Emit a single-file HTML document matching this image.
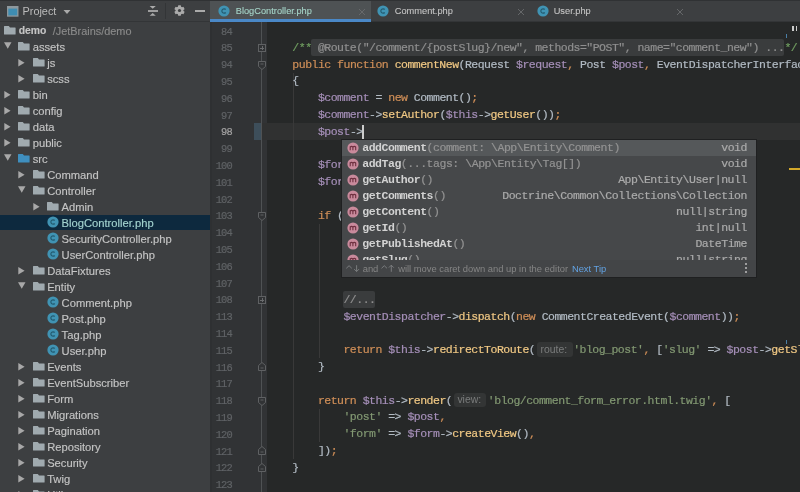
<!DOCTYPE html><html><head><meta charset="utf-8"><style>
*{box-sizing:border-box}
html,body{margin:0;padding:0}
body{width:800px;height:492px;overflow:hidden;position:relative;background:#262828;font-family:"Liberation Sans",sans-serif}
#root{position:absolute;left:0;top:0;width:800px;height:492px;will-change:transform}
.a{position:absolute}
.code{-webkit-text-stroke:0.2px currentColor;position:absolute;font-family:"Liberation Mono",monospace;font-size:11.50px;letter-spacing:-0.510px;line-height:16.80px;white-space:pre;height:16.80px}
.ln{position:absolute;left:210px;width:21.9px;padding-top:1.3px;text-align:right;font-family:"Liberation Mono",monospace;font-size:10.4px;letter-spacing:-0.84px;color:#77797b;-webkit-text-stroke:0.2px currentColor;line-height:16.80px;height:16.80px}
.tr{position:absolute;left:0;width:210px;height:16px;line-height:16px;font-size:11.2px;color:#c4c4c4;white-space:nowrap;-webkit-text-stroke:0.15px currentColor}
.tr span.t{position:absolute;top:0}
</style></head><body><div id="root">

<div class="a" style="left:0;top:0;width:210px;height:492px;background:#3d3f41"></div>
<div class="a" style="left:0;top:21px;width:210px;height:1.2px;background:#333537"></div>
<svg class="a" style="left:7px;top:6.3px" width="11.5" height="10.7" viewBox="0 0 11.5 10.7"><rect x="0" y="0" width="11.5" height="10.7" fill="#8e989d"/><rect x="1.3" y="2.6" width="8.9" height="6.8" fill="#3f8db2"/></svg>
<div class="a" style="left:22.5px;top:4px;font-size:10.9px;line-height:14px;color:#bbbbbb">Project</div>
<svg class="a" style="left:63px;top:9px" width="8" height="6" viewBox="0 0 8 6"><path d="M0.5 1H7.5L4 5z" fill="#aaaaaa"/></svg>
<svg class="a" style="left:147px;top:5px" width="12" height="12" viewBox="0 0 12 12"><path d="M1 6H11" stroke="#aaaaaa" stroke-width="1.8"/><path d="M2.6 1.1H8.8L5.7 3.8z M2.6 10.8H8.8L5.7 8.1z" fill="#aaaaaa"/></svg>
<div class="a" style="left:165.3px;top:3px;width:1.2px;height:15.5px;background:#333537"></div>
<svg class="a" style="left:173.5px;top:5.3px" width="11" height="11" viewBox="-5.5 -5.5 11 11"><g fill="#aaaaaa"><circle r="3.9"/><rect x="-1.5" y="-5.2" width="3" height="10.4" rx="0.6" transform="rotate(0)"/><rect x="-1.5" y="-5.2" width="3" height="10.4" rx="0.6" transform="rotate(60)"/><rect x="-1.5" y="-5.2" width="3" height="10.4" rx="0.6" transform="rotate(120)"/></g><circle r="1.6" fill="#3d3f41"/></svg>
<div class="a" style="left:194.7px;top:9.9px;width:10.5px;height:2px;background:#aaaaaa"></div>
<svg class="a" style="left:4.00px;top:26.30px" width="12" height="9" viewBox="0 0 12 9"><path d="M0.5 0H4.8L6 1.6H11.1Q11.6 1.6 11.6 2.1V8.1Q11.6 8.6 11.1 8.6H0.5Q0 8.6 0 8.1V0.5Q0 0 0.5 0z" fill="#a0aaaf"/></svg>
<div class="tr" style="top:22.80px"><span class="t" style="left:18.7px;font-weight:bold;font-size:10.4px">demo</span><span class="t" style="left:52.8px;color:#8a8a8a;font-size:10.9px">/JetBrains/demo</span></div>
<svg class="a" style="left:4.00px;top:42.30px" width="8" height="7" viewBox="0 0 8 7"><path d="M0 0.3H7.5L3.75 6.7z" fill="#a8a8a8"/></svg>
<svg class="a" style="left:18.30px;top:41.80px" width="12" height="9" viewBox="0 0 12 9"><path d="M0.5 0H4.8L6 1.6H11.1Q11.6 1.6 11.6 2.1V8.1Q11.6 8.6 11.1 8.6H0.5Q0 8.6 0 8.1V0.5Q0 0 0.5 0z" fill="#a0aaaf"/></svg>
<div class="tr" style="top:38.80px"><span class="t" style="left:32.70px;color:#c4c4c4">assets</span></div>
<svg class="a" style="left:18.25px;top:59.00px" width="7" height="8" viewBox="0 0 7 8"><path d="M0.3 0V7.6L6.6 3.8z" fill="#a8a8a8"/></svg>
<svg class="a" style="left:32.75px;top:57.80px" width="12" height="9" viewBox="0 0 12 9"><path d="M0.5 0H4.8L6 1.6H11.1Q11.6 1.6 11.6 2.1V8.1Q11.6 8.6 11.1 8.6H0.5Q0 8.6 0 8.1V0.5Q0 0 0.5 0z" fill="#a0aaaf"/></svg>
<div class="tr" style="top:54.80px"><span class="t" style="left:47.15px;color:#c4c4c4">js</span></div>
<svg class="a" style="left:18.25px;top:75.00px" width="7" height="8" viewBox="0 0 7 8"><path d="M0.3 0V7.6L6.6 3.8z" fill="#a8a8a8"/></svg>
<svg class="a" style="left:32.75px;top:73.80px" width="12" height="9" viewBox="0 0 12 9"><path d="M0.5 0H4.8L6 1.6H11.1Q11.6 1.6 11.6 2.1V8.1Q11.6 8.6 11.1 8.6H0.5Q0 8.6 0 8.1V0.5Q0 0 0.5 0z" fill="#a0aaaf"/></svg>
<div class="tr" style="top:70.80px"><span class="t" style="left:47.15px;color:#c4c4c4">scss</span></div>
<svg class="a" style="left:3.80px;top:91.00px" width="7" height="8" viewBox="0 0 7 8"><path d="M0.3 0V7.6L6.6 3.8z" fill="#a8a8a8"/></svg>
<svg class="a" style="left:18.30px;top:89.80px" width="12" height="9" viewBox="0 0 12 9"><path d="M0.5 0H4.8L6 1.6H11.1Q11.6 1.6 11.6 2.1V8.1Q11.6 8.6 11.1 8.6H0.5Q0 8.6 0 8.1V0.5Q0 0 0.5 0z" fill="#a0aaaf"/></svg>
<div class="tr" style="top:86.80px"><span class="t" style="left:32.70px;color:#c4c4c4">bin</span></div>
<svg class="a" style="left:3.80px;top:107.00px" width="7" height="8" viewBox="0 0 7 8"><path d="M0.3 0V7.6L6.6 3.8z" fill="#a8a8a8"/></svg>
<svg class="a" style="left:18.30px;top:105.80px" width="12" height="9" viewBox="0 0 12 9"><path d="M0.5 0H4.8L6 1.6H11.1Q11.6 1.6 11.6 2.1V8.1Q11.6 8.6 11.1 8.6H0.5Q0 8.6 0 8.1V0.5Q0 0 0.5 0z" fill="#a0aaaf"/></svg>
<div class="tr" style="top:102.80px"><span class="t" style="left:32.70px;color:#c4c4c4">config</span></div>
<svg class="a" style="left:3.80px;top:123.00px" width="7" height="8" viewBox="0 0 7 8"><path d="M0.3 0V7.6L6.6 3.8z" fill="#a8a8a8"/></svg>
<svg class="a" style="left:18.30px;top:121.80px" width="12" height="9" viewBox="0 0 12 9"><path d="M0.5 0H4.8L6 1.6H11.1Q11.6 1.6 11.6 2.1V8.1Q11.6 8.6 11.1 8.6H0.5Q0 8.6 0 8.1V0.5Q0 0 0.5 0z" fill="#a0aaaf"/></svg>
<div class="tr" style="top:118.80px"><span class="t" style="left:32.70px;color:#c4c4c4">data</span></div>
<svg class="a" style="left:3.80px;top:139.00px" width="7" height="8" viewBox="0 0 7 8"><path d="M0.3 0V7.6L6.6 3.8z" fill="#a8a8a8"/></svg>
<svg class="a" style="left:18.30px;top:137.80px" width="12" height="9" viewBox="0 0 12 9"><path d="M0.5 0H4.8L6 1.6H11.1Q11.6 1.6 11.6 2.1V8.1Q11.6 8.6 11.1 8.6H0.5Q0 8.6 0 8.1V0.5Q0 0 0.5 0z" fill="#a0aaaf"/></svg>
<div class="tr" style="top:134.80px"><span class="t" style="left:32.70px;color:#c4c4c4">public</span></div>
<svg class="a" style="left:4.00px;top:154.30px" width="8" height="7" viewBox="0 0 8 7"><path d="M0 0.3H7.5L3.75 6.7z" fill="#a8a8a8"/></svg>
<svg class="a" style="left:18.30px;top:153.80px" width="12" height="9" viewBox="0 0 12 9"><path d="M0.5 0H4.8L6 1.6H11.1Q11.6 1.6 11.6 2.1V8.1Q11.6 8.6 11.1 8.6H0.5Q0 8.6 0 8.1V0.5Q0 0 0.5 0z" fill="#3f8fbf"/></svg>
<div class="tr" style="top:150.80px"><span class="t" style="left:32.70px;color:#c4c4c4">src</span></div>
<svg class="a" style="left:18.25px;top:171.00px" width="7" height="8" viewBox="0 0 7 8"><path d="M0.3 0V7.6L6.6 3.8z" fill="#a8a8a8"/></svg>
<svg class="a" style="left:32.75px;top:169.80px" width="12" height="9" viewBox="0 0 12 9"><path d="M0.5 0H4.8L6 1.6H11.1Q11.6 1.6 11.6 2.1V8.1Q11.6 8.6 11.1 8.6H0.5Q0 8.6 0 8.1V0.5Q0 0 0.5 0z" fill="#a0aaaf"/></svg>
<div class="tr" style="top:166.80px"><span class="t" style="left:47.15px;color:#c4c4c4">Command</span></div>
<svg class="a" style="left:18.45px;top:186.30px" width="8" height="7" viewBox="0 0 8 7"><path d="M0 0.3H7.5L3.75 6.7z" fill="#a8a8a8"/></svg>
<svg class="a" style="left:32.75px;top:185.80px" width="12" height="9" viewBox="0 0 12 9"><path d="M0.5 0H4.8L6 1.6H11.1Q11.6 1.6 11.6 2.1V8.1Q11.6 8.6 11.1 8.6H0.5Q0 8.6 0 8.1V0.5Q0 0 0.5 0z" fill="#a0aaaf"/></svg>
<div class="tr" style="top:182.80px"><span class="t" style="left:47.15px;color:#c4c4c4">Controller</span></div>
<svg class="a" style="left:32.70px;top:203.00px" width="7" height="8" viewBox="0 0 7 8"><path d="M0.3 0V7.6L6.6 3.8z" fill="#a8a8a8"/></svg>
<svg class="a" style="left:47.20px;top:201.80px" width="12" height="9" viewBox="0 0 12 9"><path d="M0.5 0H4.8L6 1.6H11.1Q11.6 1.6 11.6 2.1V8.1Q11.6 8.6 11.1 8.6H0.5Q0 8.6 0 8.1V0.5Q0 0 0.5 0z" fill="#a0aaaf"/></svg>
<div class="tr" style="top:198.80px"><span class="t" style="left:61.60px;color:#c4c4c4">Admin</span></div>
<div class="a" style="left:0;top:214.60px;width:210px;height:15.4px;background:#0d293e"></div>
<svg class="a" style="left:46.70px;top:216.40px" width="12" height="12" viewBox="0 0 12 12"><circle cx="6" cy="6" r="5.6" fill="#4093b3"/><path d="M7.7 4.5A2.2 2.2 0 1 0 7.7 7.5" fill="none" stroke="#235b70" stroke-width="1.2"/></svg>
<div class="tr" style="top:214.80px"><span class="t" style="left:61.60px;color:#a3d3cf">BlogController.php</span></div>
<svg class="a" style="left:46.70px;top:232.40px" width="12" height="12" viewBox="0 0 12 12"><circle cx="6" cy="6" r="5.6" fill="#4093b3"/><path d="M7.7 4.5A2.2 2.2 0 1 0 7.7 7.5" fill="none" stroke="#235b70" stroke-width="1.2"/></svg>
<div class="tr" style="top:230.80px"><span class="t" style="left:61.60px;color:#c4c4c4">SecurityController.php</span></div>
<svg class="a" style="left:46.70px;top:248.40px" width="12" height="12" viewBox="0 0 12 12"><circle cx="6" cy="6" r="5.6" fill="#4093b3"/><path d="M7.7 4.5A2.2 2.2 0 1 0 7.7 7.5" fill="none" stroke="#235b70" stroke-width="1.2"/></svg>
<div class="tr" style="top:246.80px"><span class="t" style="left:61.60px;color:#c4c4c4">UserController.php</span></div>
<svg class="a" style="left:18.25px;top:267.00px" width="7" height="8" viewBox="0 0 7 8"><path d="M0.3 0V7.6L6.6 3.8z" fill="#a8a8a8"/></svg>
<svg class="a" style="left:32.75px;top:265.80px" width="12" height="9" viewBox="0 0 12 9"><path d="M0.5 0H4.8L6 1.6H11.1Q11.6 1.6 11.6 2.1V8.1Q11.6 8.6 11.1 8.6H0.5Q0 8.6 0 8.1V0.5Q0 0 0.5 0z" fill="#a0aaaf"/></svg>
<div class="tr" style="top:262.80px"><span class="t" style="left:47.15px;color:#c4c4c4">DataFixtures</span></div>
<svg class="a" style="left:18.45px;top:282.30px" width="8" height="7" viewBox="0 0 8 7"><path d="M0 0.3H7.5L3.75 6.7z" fill="#a8a8a8"/></svg>
<svg class="a" style="left:32.75px;top:281.80px" width="12" height="9" viewBox="0 0 12 9"><path d="M0.5 0H4.8L6 1.6H11.1Q11.6 1.6 11.6 2.1V8.1Q11.6 8.6 11.1 8.6H0.5Q0 8.6 0 8.1V0.5Q0 0 0.5 0z" fill="#a0aaaf"/></svg>
<div class="tr" style="top:278.80px"><span class="t" style="left:47.15px;color:#c4c4c4">Entity</span></div>
<svg class="a" style="left:46.70px;top:296.40px" width="12" height="12" viewBox="0 0 12 12"><circle cx="6" cy="6" r="5.6" fill="#4093b3"/><path d="M7.7 4.5A2.2 2.2 0 1 0 7.7 7.5" fill="none" stroke="#235b70" stroke-width="1.2"/></svg>
<div class="tr" style="top:294.80px"><span class="t" style="left:61.60px;color:#c4c4c4">Comment.php</span></div>
<svg class="a" style="left:46.70px;top:312.40px" width="12" height="12" viewBox="0 0 12 12"><circle cx="6" cy="6" r="5.6" fill="#4093b3"/><path d="M7.7 4.5A2.2 2.2 0 1 0 7.7 7.5" fill="none" stroke="#235b70" stroke-width="1.2"/></svg>
<div class="tr" style="top:310.80px"><span class="t" style="left:61.60px;color:#c4c4c4">Post.php</span></div>
<svg class="a" style="left:46.70px;top:328.40px" width="12" height="12" viewBox="0 0 12 12"><circle cx="6" cy="6" r="5.6" fill="#4093b3"/><path d="M7.7 4.5A2.2 2.2 0 1 0 7.7 7.5" fill="none" stroke="#235b70" stroke-width="1.2"/></svg>
<div class="tr" style="top:326.80px"><span class="t" style="left:61.60px;color:#c4c4c4">Tag.php</span></div>
<svg class="a" style="left:46.70px;top:344.40px" width="12" height="12" viewBox="0 0 12 12"><circle cx="6" cy="6" r="5.6" fill="#4093b3"/><path d="M7.7 4.5A2.2 2.2 0 1 0 7.7 7.5" fill="none" stroke="#235b70" stroke-width="1.2"/></svg>
<div class="tr" style="top:342.80px"><span class="t" style="left:61.60px;color:#c4c4c4">User.php</span></div>
<svg class="a" style="left:18.25px;top:363.00px" width="7" height="8" viewBox="0 0 7 8"><path d="M0.3 0V7.6L6.6 3.8z" fill="#a8a8a8"/></svg>
<svg class="a" style="left:32.75px;top:361.80px" width="12" height="9" viewBox="0 0 12 9"><path d="M0.5 0H4.8L6 1.6H11.1Q11.6 1.6 11.6 2.1V8.1Q11.6 8.6 11.1 8.6H0.5Q0 8.6 0 8.1V0.5Q0 0 0.5 0z" fill="#a0aaaf"/></svg>
<div class="tr" style="top:358.80px"><span class="t" style="left:47.15px;color:#c4c4c4">Events</span></div>
<svg class="a" style="left:18.25px;top:379.00px" width="7" height="8" viewBox="0 0 7 8"><path d="M0.3 0V7.6L6.6 3.8z" fill="#a8a8a8"/></svg>
<svg class="a" style="left:32.75px;top:377.80px" width="12" height="9" viewBox="0 0 12 9"><path d="M0.5 0H4.8L6 1.6H11.1Q11.6 1.6 11.6 2.1V8.1Q11.6 8.6 11.1 8.6H0.5Q0 8.6 0 8.1V0.5Q0 0 0.5 0z" fill="#a0aaaf"/></svg>
<div class="tr" style="top:374.80px"><span class="t" style="left:47.15px;color:#c4c4c4">EventSubscriber</span></div>
<svg class="a" style="left:18.25px;top:395.00px" width="7" height="8" viewBox="0 0 7 8"><path d="M0.3 0V7.6L6.6 3.8z" fill="#a8a8a8"/></svg>
<svg class="a" style="left:32.75px;top:393.80px" width="12" height="9" viewBox="0 0 12 9"><path d="M0.5 0H4.8L6 1.6H11.1Q11.6 1.6 11.6 2.1V8.1Q11.6 8.6 11.1 8.6H0.5Q0 8.6 0 8.1V0.5Q0 0 0.5 0z" fill="#a0aaaf"/></svg>
<div class="tr" style="top:390.80px"><span class="t" style="left:47.15px;color:#c4c4c4">Form</span></div>
<svg class="a" style="left:18.25px;top:411.00px" width="7" height="8" viewBox="0 0 7 8"><path d="M0.3 0V7.6L6.6 3.8z" fill="#a8a8a8"/></svg>
<svg class="a" style="left:32.75px;top:409.80px" width="12" height="9" viewBox="0 0 12 9"><path d="M0.5 0H4.8L6 1.6H11.1Q11.6 1.6 11.6 2.1V8.1Q11.6 8.6 11.1 8.6H0.5Q0 8.6 0 8.1V0.5Q0 0 0.5 0z" fill="#a0aaaf"/></svg>
<div class="tr" style="top:406.80px"><span class="t" style="left:47.15px;color:#c4c4c4">Migrations</span></div>
<svg class="a" style="left:18.25px;top:427.00px" width="7" height="8" viewBox="0 0 7 8"><path d="M0.3 0V7.6L6.6 3.8z" fill="#a8a8a8"/></svg>
<svg class="a" style="left:32.75px;top:425.80px" width="12" height="9" viewBox="0 0 12 9"><path d="M0.5 0H4.8L6 1.6H11.1Q11.6 1.6 11.6 2.1V8.1Q11.6 8.6 11.1 8.6H0.5Q0 8.6 0 8.1V0.5Q0 0 0.5 0z" fill="#a0aaaf"/></svg>
<div class="tr" style="top:422.80px"><span class="t" style="left:47.15px;color:#c4c4c4">Pagination</span></div>
<svg class="a" style="left:18.25px;top:443.00px" width="7" height="8" viewBox="0 0 7 8"><path d="M0.3 0V7.6L6.6 3.8z" fill="#a8a8a8"/></svg>
<svg class="a" style="left:32.75px;top:441.80px" width="12" height="9" viewBox="0 0 12 9"><path d="M0.5 0H4.8L6 1.6H11.1Q11.6 1.6 11.6 2.1V8.1Q11.6 8.6 11.1 8.6H0.5Q0 8.6 0 8.1V0.5Q0 0 0.5 0z" fill="#a0aaaf"/></svg>
<div class="tr" style="top:438.80px"><span class="t" style="left:47.15px;color:#c4c4c4">Repository</span></div>
<svg class="a" style="left:18.25px;top:459.00px" width="7" height="8" viewBox="0 0 7 8"><path d="M0.3 0V7.6L6.6 3.8z" fill="#a8a8a8"/></svg>
<svg class="a" style="left:32.75px;top:457.80px" width="12" height="9" viewBox="0 0 12 9"><path d="M0.5 0H4.8L6 1.6H11.1Q11.6 1.6 11.6 2.1V8.1Q11.6 8.6 11.1 8.6H0.5Q0 8.6 0 8.1V0.5Q0 0 0.5 0z" fill="#a0aaaf"/></svg>
<div class="tr" style="top:454.80px"><span class="t" style="left:47.15px;color:#c4c4c4">Security</span></div>
<svg class="a" style="left:18.25px;top:475.00px" width="7" height="8" viewBox="0 0 7 8"><path d="M0.3 0V7.6L6.6 3.8z" fill="#a8a8a8"/></svg>
<svg class="a" style="left:32.75px;top:473.80px" width="12" height="9" viewBox="0 0 12 9"><path d="M0.5 0H4.8L6 1.6H11.1Q11.6 1.6 11.6 2.1V8.1Q11.6 8.6 11.1 8.6H0.5Q0 8.6 0 8.1V0.5Q0 0 0.5 0z" fill="#a0aaaf"/></svg>
<div class="tr" style="top:470.80px"><span class="t" style="left:47.15px;color:#c4c4c4">Twig</span></div>
<svg class="a" style="left:18.25px;top:491.00px" width="7" height="8" viewBox="0 0 7 8"><path d="M0.3 0V7.6L6.6 3.8z" fill="#a8a8a8"/></svg>
<svg class="a" style="left:32.75px;top:489.80px" width="12" height="9" viewBox="0 0 12 9"><path d="M0.5 0H4.8L6 1.6H11.1Q11.6 1.6 11.6 2.1V8.1Q11.6 8.6 11.1 8.6H0.5Q0 8.6 0 8.1V0.5Q0 0 0.5 0z" fill="#a0aaaf"/></svg>
<div class="tr" style="top:486.80px"><span class="t" style="left:47.15px;color:#c4c4c4">Util</span></div>
<div class="a" style="left:210px;top:0;width:590px;height:22px;background:#3d3f41"></div>
<div class="a" style="left:371.25px;top:21px;width:429px;height:1.2px;background:#333537"></div>
<div class="a" style="left:210px;top:0;width:161.25px;height:22px;background:#4e5254"></div>
<div class="a" style="left:210px;top:19.4px;width:161.25px;height:3px;background:#4a88c7"></div>
<svg class="a" style="left:217.75px;top:5.00px" width="12" height="12" viewBox="0 0 12 12"><circle cx="6" cy="6" r="5.6" fill="#4093b3"/><path d="M7.7 4.5A2.2 2.2 0 1 0 7.7 7.5" fill="none" stroke="#235b70" stroke-width="1.2"/></svg>
<div class="a" style="left:235.75px;top:4.2px;font-size:9.25px;line-height:14px;color:#a5d5c8;white-space:nowrap;-webkit-text-stroke:0.1px currentColor">BlogController.php</div>
<svg class="a" style="left:357.75px;top:7.50px" width="8" height="8" viewBox="0 0 8 8"><path d="M1 1L7 7M7 1L1 7" stroke="#6a6c6e" stroke-width="0.9"/></svg>
<svg class="a" style="left:377.20px;top:5.00px" width="12" height="12" viewBox="0 0 12 12"><circle cx="6" cy="6" r="5.6" fill="#4093b3"/><path d="M7.7 4.5A2.2 2.2 0 1 0 7.7 7.5" fill="none" stroke="#235b70" stroke-width="1.2"/></svg>
<div class="a" style="left:394.75px;top:4.2px;font-size:9.25px;line-height:14px;color:#c4c4c4;white-space:nowrap;-webkit-text-stroke:0.1px currentColor">Comment.php</div>
<svg class="a" style="left:516.70px;top:7.50px" width="8" height="8" viewBox="0 0 8 8"><path d="M1 1L7 7M7 1L1 7" stroke="#6a6c6e" stroke-width="0.9"/></svg>
<svg class="a" style="left:536.70px;top:5.00px" width="12" height="12" viewBox="0 0 12 12"><circle cx="6" cy="6" r="5.6" fill="#4093b3"/><path d="M7.7 4.5A2.2 2.2 0 1 0 7.7 7.5" fill="none" stroke="#235b70" stroke-width="1.2"/></svg>
<div class="a" style="left:553.70px;top:4.2px;font-size:9.25px;line-height:14px;color:#c4c4c4;white-space:nowrap;-webkit-text-stroke:0.1px currentColor">User.php</div>
<svg class="a" style="left:675.70px;top:7.50px" width="8" height="8" viewBox="0 0 8 8"><path d="M1 1L7 7M7 1L1 7" stroke="#6a6c6e" stroke-width="0.9"/></svg>
<div class="a" style="left:210px;top:22px;width:56.8px;height:470px;background:#313335"></div>
<div class="a" style="left:210px;top:22px;width:1.5px;height:470px;background:#2e3032"></div>
<div class="a" style="left:261.2px;top:22px;width:1px;height:470px;background:#4f5254"></div>
<div class="a" style="left:262px;top:123.20px;width:538px;height:16.80px;background:#303131"></div>
<div class="a" style="left:254px;top:123.20px;width:7.2px;height:16.80px;background:#3d4e5a"></div>
<div class="a" style="left:293.36px;top:72.80px;width:1px;height:386.40px;background:#393939"></div>
<div class="a" style="left:318.92px;top:224.00px;width:1px;height:134.40px;background:#393939"></div>
<div class="a" style="left:318.92px;top:408.80px;width:1px;height:33.60px;background:#393939"></div>
<div class="ln" style="top:22.40px;color:#606366">84</div>
<div class="ln" style="top:39.20px;color:#606366">85</div>
<div class="ln" style="top:56.00px;color:#606366">94</div>
<div class="ln" style="top:72.80px;color:#606366">95</div>
<div class="ln" style="top:89.60px;color:#606366">96</div>
<div class="ln" style="top:106.40px;color:#606366">97</div>
<div class="ln" style="top:123.20px;color:#a4a3a3">98</div>
<div class="ln" style="top:140.00px;color:#606366">99</div>
<div class="ln" style="top:156.80px;color:#606366">100</div>
<div class="ln" style="top:173.60px;color:#606366">101</div>
<div class="ln" style="top:190.40px;color:#606366">102</div>
<div class="ln" style="top:207.20px;color:#606366">103</div>
<div class="ln" style="top:224.00px;color:#606366">104</div>
<div class="ln" style="top:240.80px;color:#606366">105</div>
<div class="ln" style="top:257.60px;color:#606366">106</div>
<div class="ln" style="top:274.40px;color:#606366">107</div>
<div class="ln" style="top:291.20px;color:#606366">108</div>
<div class="ln" style="top:308.00px;color:#606366">113</div>
<div class="ln" style="top:324.80px;color:#606366">114</div>
<div class="ln" style="top:341.60px;color:#606366">115</div>
<div class="ln" style="top:358.40px;color:#606366">116</div>
<div class="ln" style="top:375.20px;color:#606366">117</div>
<div class="ln" style="top:392.00px;color:#606366">118</div>
<div class="ln" style="top:408.80px;color:#606366">119</div>
<div class="ln" style="top:425.60px;color:#606366">120</div>
<div class="ln" style="top:442.40px;color:#606366">121</div>
<div class="ln" style="top:459.20px;color:#606366">122</div>
<div class="ln" style="top:476.00px;color:#606366">123</div>
<svg class="a" style="left:258px;top:44px" width="8" height="8" viewBox="0 0 8 8"><rect x="0.5" y="0.5" width="7" height="7" fill="#313335" stroke="#5f6163"/><path d="M2 4.5H6M4.5 2V6" stroke="#6a6c6e"/></svg>
<svg class="a" style="left:258px;top:61px" width="8" height="9" viewBox="0 0 8 9"><path d="M0.5 0.5H7.5V5.5L4 8.5L0.5 5.5z" fill="#313335" stroke="#5f6163"/><path d="M2.5 3H5.5" stroke="#5f6163"/></svg>
<svg class="a" style="left:258px;top:212px" width="8" height="9" viewBox="0 0 8 9"><path d="M0.5 0.5H7.5V5.5L4 8.5L0.5 5.5z" fill="#313335" stroke="#5f6163"/><path d="M2.5 3H5.5" stroke="#5f6163"/></svg>
<svg class="a" style="left:258px;top:296px" width="8" height="8" viewBox="0 0 8 8"><rect x="0.5" y="0.5" width="7" height="7" fill="#313335" stroke="#5f6163"/><path d="M2 4.5H6M4.5 2V6" stroke="#6a6c6e"/></svg>
<svg class="a" style="left:258px;top:362px" width="8" height="9" viewBox="0 0 8 9"><path d="M0.5 8.5H7.5V3.5L4 0.5L0.5 3.5z" fill="#313335" stroke="#5f6163"/><path d="M2.5 6H5.5" stroke="#5f6163"/></svg>
<svg class="a" style="left:258px;top:397px" width="8" height="9" viewBox="0 0 8 9"><path d="M0.5 0.5H7.5V5.5L4 8.5L0.5 5.5z" fill="#313335" stroke="#5f6163"/><path d="M2.5 3H5.5" stroke="#5f6163"/></svg>
<svg class="a" style="left:258px;top:446px" width="8" height="9" viewBox="0 0 8 9"><path d="M0.5 8.5H7.5V3.5L4 0.5L0.5 3.5z" fill="#313335" stroke="#5f6163"/><path d="M2.5 6H5.5" stroke="#5f6163"/></svg>
<svg class="a" style="left:258px;top:463px" width="8" height="9" viewBox="0 0 8 9"><path d="M0.5 8.5H7.5V3.5L4 0.5L0.5 3.5z" fill="#313335" stroke="#5f6163"/><path d="M2.5 6H5.5" stroke="#5f6163"/></svg>
<div class="a" style="left:311.03px;top:39.20px;width:473.36px;height:16.80px;background:#3a3c3d;border-radius:2px"></div>
<div class="code" style="left:311.53px;top:39.70px;color:#8f8f8f"> @Route(&quot;/comment/{postSlug}/new&quot;, methods=&quot;POST&quot;, name=&quot;comment_new&quot;) ...</div>
<div class="code" style="left:292.36px;top:39.70px"><span style="color:#6f9d60">/**</span></div>
<div class="code" style="left:784.39px;top:39.70px"><span style="color:#6f9d60">*/</span></div>
<div class="code" style="left:292.36px;top:56.50px"><span style="color:#d08f58">public function </span><span style="color:#f0c884">commentNew</span><span style="color:#b2bbc4">(Request </span><span style="color:#a58fb8">$request</span><span style="color:#d08f58">,</span><span style="color:#b2bbc4"> Post </span><span style="color:#a58fb8">$post</span><span style="color:#d08f58">,</span><span style="color:#b2bbc4"> EventDispatcherInterface </span><span style="color:#a58fb8">$eventDispatcher</span></div>
<div class="code" style="left:292.36px;top:73.30px"><span style="color:#b2bbc4">{</span></div>
<div class="code" style="left:317.92px;top:90.10px"><span style="color:#a58fb8">$comment</span><span style="color:#b2bbc4"> = </span><span style="color:#d08f58">new </span><span style="color:#b2bbc4">Comment()</span><span style="color:#d08f58">;</span></div>
<div class="code" style="left:317.92px;top:106.90px"><span style="color:#a58fb8">$comment</span><span style="color:#b2bbc4">-&gt;</span><span style="color:#f0c884">setAuthor</span><span style="color:#b2bbc4">(</span><span style="color:#a58fb8">$this</span><span style="color:#b2bbc4">-&gt;</span><span style="color:#f0c884">getUser</span><span style="color:#b2bbc4">())</span><span style="color:#d08f58">;</span></div>
<div class="code" style="left:317.92px;top:123.70px"><span style="color:#a58fb8">$post</span><span style="color:#b2bbc4">-&gt;</span></div>
<div class="code" style="left:317.92px;top:157.30px"><span style="color:#a58fb8">$form</span><span style="color:#b2bbc4"> = </span><span style="color:#a58fb8">$this</span></div>
<div class="code" style="left:317.92px;top:174.10px"><span style="color:#a58fb8">$form</span><span style="color:#b2bbc4">-&gt;handleRequest</span></div>
<div class="code" style="left:317.92px;top:207.70px"><span style="color:#d08f58">if </span><span style="color:#b2bbc4">(</span><span style="color:#a58fb8">$form</span></div>
<div class="a" style="left:342.98px;top:291.20px;width:32.45px;height:16.80px;background:#3a3c3d;border-radius:2px"></div>
<div class="code" style="left:343.48px;top:291.70px;color:#8f8f8f">//...</div>
<div class="code" style="left:343.48px;top:308.50px"><span style="color:#a58fb8">$eventDispatcher</span><span style="color:#b2bbc4">-&gt;</span><span style="color:#f0c884">dispatch</span><span style="color:#b2bbc4">(</span><span style="color:#d08f58">new </span><span style="color:#b2bbc4">CommentCreatedEvent(</span><span style="color:#a58fb8">$comment</span><span style="color:#b2bbc4">))</span><span style="color:#d08f58">;</span></div>
<div class="a" style="left:536.58px;top:342.10px;width:36.00px;height:14.6px;background:#333535;border-radius:3px;padding-left:3.9px;font-size:10.45px;line-height:14.6px;color:#7a7c7c;padding-top:0.6px">route:</div>
<div class="code" style="left:343.48px;top:342.10px"><span style="color:#d08f58">return </span><span style="color:#a58fb8">$this</span><span style="color:#b2bbc4">-&gt;</span><span style="color:#f0c884">redirectToRoute</span><span style="color:#b2bbc4">(</span><span style="display:inline-block;width:37.86px;letter-spacing:0"></span><span style="color:#829872">&#x27;blog_post&#x27;</span><span style="color:#d08f58">, </span><span style="color:#b2bbc4">[</span><span style="color:#829872">&#x27;slug&#x27;</span><span style="color:#b2bbc4"> =&gt; </span><span style="color:#a58fb8">$post</span><span style="color:#b2bbc4">-&gt;</span><span style="color:#f0c884">getSlug</span><span style="color:#b2bbc4">()])</span><span style="color:#d08f58">;</span></div>
<div class="code" style="left:317.92px;top:358.90px"><span style="color:#b2bbc4">}</span></div>
<div class="a" style="left:453.51px;top:392.50px;width:32.00px;height:14.6px;background:#333535;border-radius:3px;padding-left:3.9px;font-size:10.45px;line-height:14.6px;color:#7a7c7c;padding-top:0.6px">view:</div>
<div class="code" style="left:317.92px;top:392.50px"><span style="color:#d08f58">return </span><span style="color:#a58fb8">$this</span><span style="color:#b2bbc4">-&gt;</span><span style="color:#f0c884">render</span><span style="color:#b2bbc4">(</span><span style="display:inline-block;width:35.66px;letter-spacing:0"></span><span style="color:#829872">&#x27;blog/comment_form_error.html.twig&#x27;</span><span style="color:#d08f58">, </span><span style="color:#b2bbc4">[</span></div>
<div class="code" style="left:343.48px;top:409.30px"><span style="color:#829872">&#x27;post&#x27;</span><span style="color:#b2bbc4"> =&gt; </span><span style="color:#a58fb8">$post</span><span style="color:#d08f58">,</span></div>
<div class="code" style="left:343.48px;top:426.10px"><span style="color:#829872">&#x27;form&#x27;</span><span style="color:#b2bbc4"> =&gt; </span><span style="color:#a58fb8">$form</span><span style="color:#b2bbc4">-&gt;</span><span style="color:#f0c884">createView</span><span style="color:#b2bbc4">()</span><span style="color:#d08f58">,</span></div>
<div class="code" style="left:317.92px;top:442.90px"><span style="color:#b2bbc4">])</span><span style="color:#d08f58">;</span></div>
<div class="code" style="left:292.36px;top:459.70px"><span style="color:#b2bbc4">}</span></div>
<div class="a" style="left:362.15px;top:125.00px;width:1.6px;height:14px;background:#cccccc"></div>
<div class="a" style="left:792px;top:25.5px;width:1.5px;height:5.5px;background:#cccccc"></div><div class="a" style="left:795.5px;top:25.5px;width:1.5px;height:5.5px;background:#cccccc"></div>
<div class="a" style="left:785.5px;top:34px;width:1.2px;height:4px;background:#4a7fa6"></div>
<div class="a" style="left:785.7px;top:340px;width:1.2px;height:4px;background:#4a7fa6"></div>
<div class="a" style="left:789px;top:168px;width:11px;height:2px;background:#d4a92a"></div>
<div class="a" style="left:340.50px;top:138.75px;width:416.00px;height:139.00px;background:#1f2021"></div>
<div class="a" style="left:341.50px;top:139.75px;width:414.50px;height:137.50px;background:#46484a;overflow:hidden">
<div class="a" style="left:0;top:0;width:414.50px;height:120.25px;overflow:hidden">
<div class="a" style="left:0;top:0;width:414.50px;height:16px;background:#55585a"></div>
<svg class="a" style="left:5.6px;top:2.40px" width="12" height="12" viewBox="0 0 12 12"><circle cx="6" cy="6" r="5.6" fill="#c98a9c"/><path d="M3.2 8.3V4.2M3.2 5.2Q4.5 3.6 5.9 5V8.3M5.9 5.2Q7.3 3.6 8.7 5V8.3" fill="none" stroke="#6e2f3f" stroke-width="1.1"/></svg>
<div class="code" style="left:20.7px;top:0.50px;line-height:16px;height:16px;color:#bbbbbb;letter-spacing:-0.460px"><b style="color:#d2d2d2;-webkit-text-stroke:0">addComment</b><span style="color:#939393">(comment: \App\Entity\Comment)</span></div>
<div class="code" style="right:9.06px;top:0.50px;line-height:16px;height:16px;color:#ababab;text-align:right;letter-spacing:-0.460px">void</div>
<svg class="a" style="left:5.6px;top:18.40px" width="12" height="12" viewBox="0 0 12 12"><circle cx="6" cy="6" r="5.6" fill="#c98a9c"/><path d="M3.2 8.3V4.2M3.2 5.2Q4.5 3.6 5.9 5V8.3M5.9 5.2Q7.3 3.6 8.7 5V8.3" fill="none" stroke="#6e2f3f" stroke-width="1.1"/></svg>
<div class="code" style="left:20.7px;top:16.50px;line-height:16px;height:16px;color:#bbbbbb;letter-spacing:-0.460px"><b style="color:#d2d2d2;-webkit-text-stroke:0">addTag</b><span style="color:#939393">(...tags: \App\Entity\Tag[])</span></div>
<div class="code" style="right:9.06px;top:16.50px;line-height:16px;height:16px;color:#ababab;text-align:right;letter-spacing:-0.460px">void</div>
<svg class="a" style="left:5.6px;top:34.40px" width="12" height="12" viewBox="0 0 12 12"><circle cx="6" cy="6" r="5.6" fill="#c98a9c"/><path d="M3.2 8.3V4.2M3.2 5.2Q4.5 3.6 5.9 5V8.3M5.9 5.2Q7.3 3.6 8.7 5V8.3" fill="none" stroke="#6e2f3f" stroke-width="1.1"/></svg>
<div class="code" style="left:20.7px;top:32.50px;line-height:16px;height:16px;color:#bbbbbb;letter-spacing:-0.460px"><b style="color:#d2d2d2;-webkit-text-stroke:0">getAuthor</b><span style="color:#939393">()</span></div>
<div class="code" style="right:9.06px;top:32.50px;line-height:16px;height:16px;color:#ababab;text-align:right;letter-spacing:-0.460px">App\Entity\User|null</div>
<svg class="a" style="left:5.6px;top:50.40px" width="12" height="12" viewBox="0 0 12 12"><circle cx="6" cy="6" r="5.6" fill="#c98a9c"/><path d="M3.2 8.3V4.2M3.2 5.2Q4.5 3.6 5.9 5V8.3M5.9 5.2Q7.3 3.6 8.7 5V8.3" fill="none" stroke="#6e2f3f" stroke-width="1.1"/></svg>
<div class="code" style="left:20.7px;top:48.50px;line-height:16px;height:16px;color:#bbbbbb;letter-spacing:-0.460px"><b style="color:#d2d2d2;-webkit-text-stroke:0">getComments</b><span style="color:#939393">()</span></div>
<div class="code" style="right:9.06px;top:48.50px;line-height:16px;height:16px;color:#ababab;text-align:right;letter-spacing:-0.460px">Doctrine\Common\Collections\Collection</div>
<svg class="a" style="left:5.6px;top:66.40px" width="12" height="12" viewBox="0 0 12 12"><circle cx="6" cy="6" r="5.6" fill="#c98a9c"/><path d="M3.2 8.3V4.2M3.2 5.2Q4.5 3.6 5.9 5V8.3M5.9 5.2Q7.3 3.6 8.7 5V8.3" fill="none" stroke="#6e2f3f" stroke-width="1.1"/></svg>
<div class="code" style="left:20.7px;top:64.50px;line-height:16px;height:16px;color:#bbbbbb;letter-spacing:-0.460px"><b style="color:#d2d2d2;-webkit-text-stroke:0">getContent</b><span style="color:#939393">()</span></div>
<div class="code" style="right:9.06px;top:64.50px;line-height:16px;height:16px;color:#ababab;text-align:right;letter-spacing:-0.460px">null|string</div>
<svg class="a" style="left:5.6px;top:82.40px" width="12" height="12" viewBox="0 0 12 12"><circle cx="6" cy="6" r="5.6" fill="#c98a9c"/><path d="M3.2 8.3V4.2M3.2 5.2Q4.5 3.6 5.9 5V8.3M5.9 5.2Q7.3 3.6 8.7 5V8.3" fill="none" stroke="#6e2f3f" stroke-width="1.1"/></svg>
<div class="code" style="left:20.7px;top:80.50px;line-height:16px;height:16px;color:#bbbbbb;letter-spacing:-0.460px"><b style="color:#d2d2d2;-webkit-text-stroke:0">getId</b><span style="color:#939393">()</span></div>
<div class="code" style="right:9.06px;top:80.50px;line-height:16px;height:16px;color:#ababab;text-align:right;letter-spacing:-0.460px">int|null</div>
<svg class="a" style="left:5.6px;top:98.40px" width="12" height="12" viewBox="0 0 12 12"><circle cx="6" cy="6" r="5.6" fill="#c98a9c"/><path d="M3.2 8.3V4.2M3.2 5.2Q4.5 3.6 5.9 5V8.3M5.9 5.2Q7.3 3.6 8.7 5V8.3" fill="none" stroke="#6e2f3f" stroke-width="1.1"/></svg>
<div class="code" style="left:20.7px;top:96.50px;line-height:16px;height:16px;color:#bbbbbb;letter-spacing:-0.460px"><b style="color:#d2d2d2;-webkit-text-stroke:0">getPublishedAt</b><span style="color:#939393">()</span></div>
<div class="code" style="right:9.06px;top:96.50px;line-height:16px;height:16px;color:#ababab;text-align:right;letter-spacing:-0.460px">DateTime</div>
<svg class="a" style="left:5.6px;top:114.40px" width="12" height="12" viewBox="0 0 12 12"><circle cx="6" cy="6" r="5.6" fill="#c98a9c"/><path d="M3.2 8.3V4.2M3.2 5.2Q4.5 3.6 5.9 5V8.3M5.9 5.2Q7.3 3.6 8.7 5V8.3" fill="none" stroke="#6e2f3f" stroke-width="1.1"/></svg>
<div class="code" style="left:20.7px;top:112.50px;line-height:16px;height:16px;color:#bbbbbb;letter-spacing:-0.460px"><b style="color:#d2d2d2;-webkit-text-stroke:0">getSlug</b><span style="color:#939393">()</span></div>
<div class="code" style="right:9.06px;top:112.50px;line-height:16px;height:16px;color:#ababab;text-align:right;letter-spacing:-0.460px">null|string</div>
</div>
<div class="a" style="left:0;top:120.25px;width:414.50px;height:17.25px;background:#434547"></div>
<div class="a" style="left:21.20px;top:123.05px;font-size:9.4px;line-height:12px;color:#858585;white-space:nowrap">and</div>
<div class="a" style="left:56.70px;top:123.05px;font-size:9.4px;line-height:12px;color:#858585;white-space:nowrap">will move caret down and up in the editor</div>
<div class="a" style="left:230.40px;top:123.05px;font-size:9.4px;line-height:12px;color:#62a2e2;white-space:nowrap">Next Tip</div>
<svg class="a" style="left:-1.50px;top:120.25px" width="60" height="20" viewBox="340.00 260.00 60 20"><path d="M346.30 268.3L349.05 265.7L351.80 268.3" fill="none" stroke="#7f8183" stroke-width="0.9"/><path d="M356.6 265.2V271.5M354.2 269.1L356.6 271.5L359 269.1" fill="none" stroke="#7f8183" stroke-width="0.9"/><path d="M381.50 268.3L384.25 265.7L387.00 268.3" fill="none" stroke="#7f8183" stroke-width="0.9"/><path d="M391.3 265.2V271.8M388.9 267.6L391.3 265.2L393.7 267.6" fill="none" stroke="#7f8183" stroke-width="0.9"/></svg>
<div class="a" style="left:403.5px;top:123.5px;width:2.2px;height:2.2px;background:#bdbdbd;border-radius:1.1px"></div><div class="a" style="left:403.5px;top:127.5px;width:2.2px;height:2.2px;background:#bdbdbd;border-radius:1.1px"></div><div class="a" style="left:403.5px;top:131.5px;width:2.2px;height:2.2px;background:#bdbdbd;border-radius:1.1px"></div>
</div>
<div class="a" style="left:0;top:0;width:800px;height:1px;background:#303234"></div>
</div></body></html>
